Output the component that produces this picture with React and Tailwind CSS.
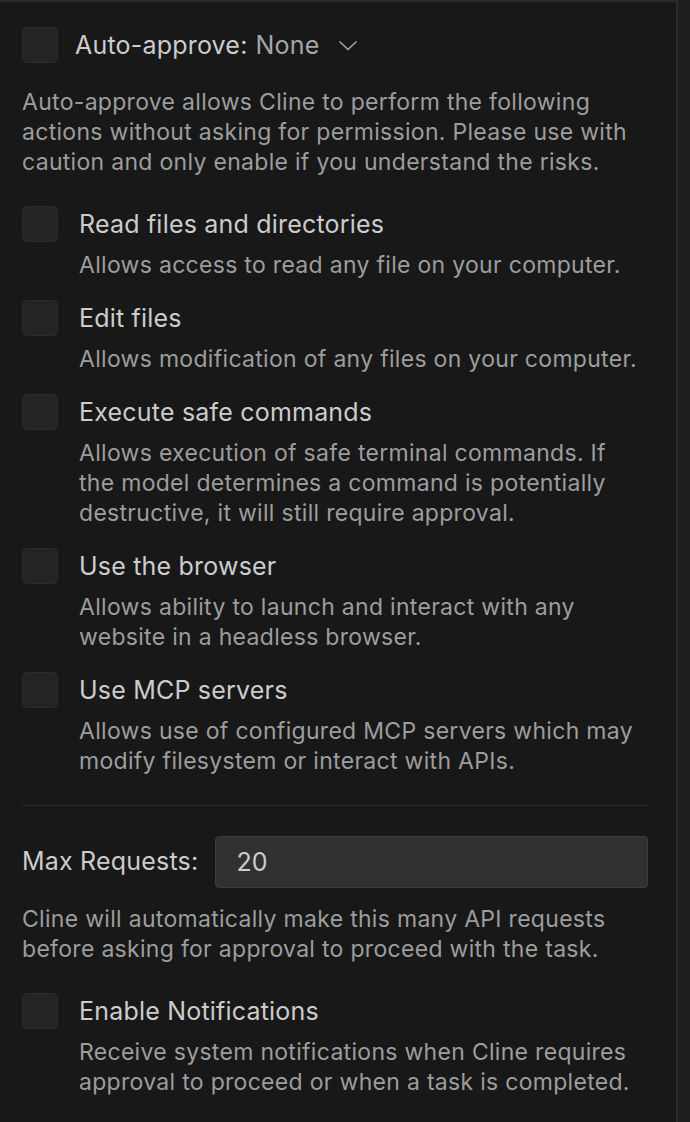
import { useState } from "react";

const items = [
  { label: "Read files and directories", desc: "Allows access to read any file on your computer." },
  { label: "Edit files", desc: "Allows modification of any files on your computer." },
  {
    label: "Execute safe commands",
    desc: "Allows execution of safe terminal commands. If the model determines a command is potentially destructive, it will still require approval.",
  },
  { label: "Use the browser", desc: "Allows ability to launch and interact with any website in a headless browser." },
  {
    label: "Use MCP servers",
    desc: "Allows use of configured MCP servers which may modify filesystem or interact with APIs.",
  },
];

function Box({ onClick }) {
  return (
    <button
      onClick={onClick}
      className="w-9 h-9 shrink-0 rounded-[5px] bg-[#242424] border border-[#2c2c2c]"
    />
  );
}

function Option({ label, desc }) {
  const [on, setOn] = useState(false);
  return (
    <div className="flex flex-col gap-2">
      <div className="flex items-center gap-[21px]">
        <Box onClick={() => setOn(!on)} />
        <span className="text-[25px] leading-9 tracking-[0.2px] text-[#cccccc]">{label}</span>
      </div>
      <p className="pl-[57px] text-[23px] leading-[30px] tracking-[0.3px] text-[#9d9d9d]">{desc}</p>
    </div>
  );
}

export default function App() {
  const [max, setMax] = useState("20");

  return (
    <div
      className="flex w-[690px] h-[1122px] bg-[#1e1e1e] overflow-hidden"
      style={{ fontFamily: "Inter, 'Noto Sans', sans-serif" }}
    >
      <div className="w-[678px] shrink-0 bg-[#181818] border-t-2 border-r-2 border-[#2b2b2b] pl-[22px] pr-[28px] pt-[25px]">
        {/* Kopf */}
        <div className="flex items-center">
          <Box />
          <span className="ml-[17px] text-[25px] leading-9 tracking-[0.2px] text-[#cccccc]">Auto-approve:</span>
          <span className="ml-[8px] text-[25px] leading-9 tracking-[0.2px] text-[#a6a6a6]">None</span>
          <svg className="ml-[18px] w-5 h-5 text-[#a6a6a6]" viewBox="0 0 20 20" fill="none" stroke="currentColor" strokeWidth={1.6}>
            <path d="M1.5 6.5l8.5 8 8.5-8" />
          </svg>
        </div>

        <p className="mt-[24px] text-[23px] leading-[30px] tracking-[0.3px] text-[#9d9d9d]">
          Auto-approve allows Cline to perform the following actions without asking for permission. Please use with
          caution and only enable if you understand the risks.
        </p>

        <div className="mt-[29px] flex flex-col gap-5">
          {items.map((it) => (
            <Option key={it.label} {...it} />
          ))}
        </div>

        <div className="mt-[29px] h-px bg-[#2e2e2e]" />

        <div className="mt-[30px] flex items-center gap-[17px]">
          <span className="text-[25px] tracking-[0.2px] text-[#cccccc]">Max Requests:</span>
          <input
            value={max}
            onChange={(e) => setMax(e.target.value)}
            className="flex-1 min-w-0 h-[52px] rounded-[4px] bg-[#313131] border border-[#3c3c3c] px-5 text-[25px] text-[#cccccc] outline-none"
          />
        </div>

        <p className="mt-4 text-[23px] leading-[30px] tracking-[0.3px] text-[#9d9d9d]">
          Cline will automatically make this many API requests before asking for approval to proceed with the task.
        </p>

        <div className="mt-[29px]">
          <Option
            label="Enable Notifications"
            desc="Receive system notifications when Cline requires approval to proceed or when a task is completed."
          />
        </div>
      </div>
    </div>
  );
}
